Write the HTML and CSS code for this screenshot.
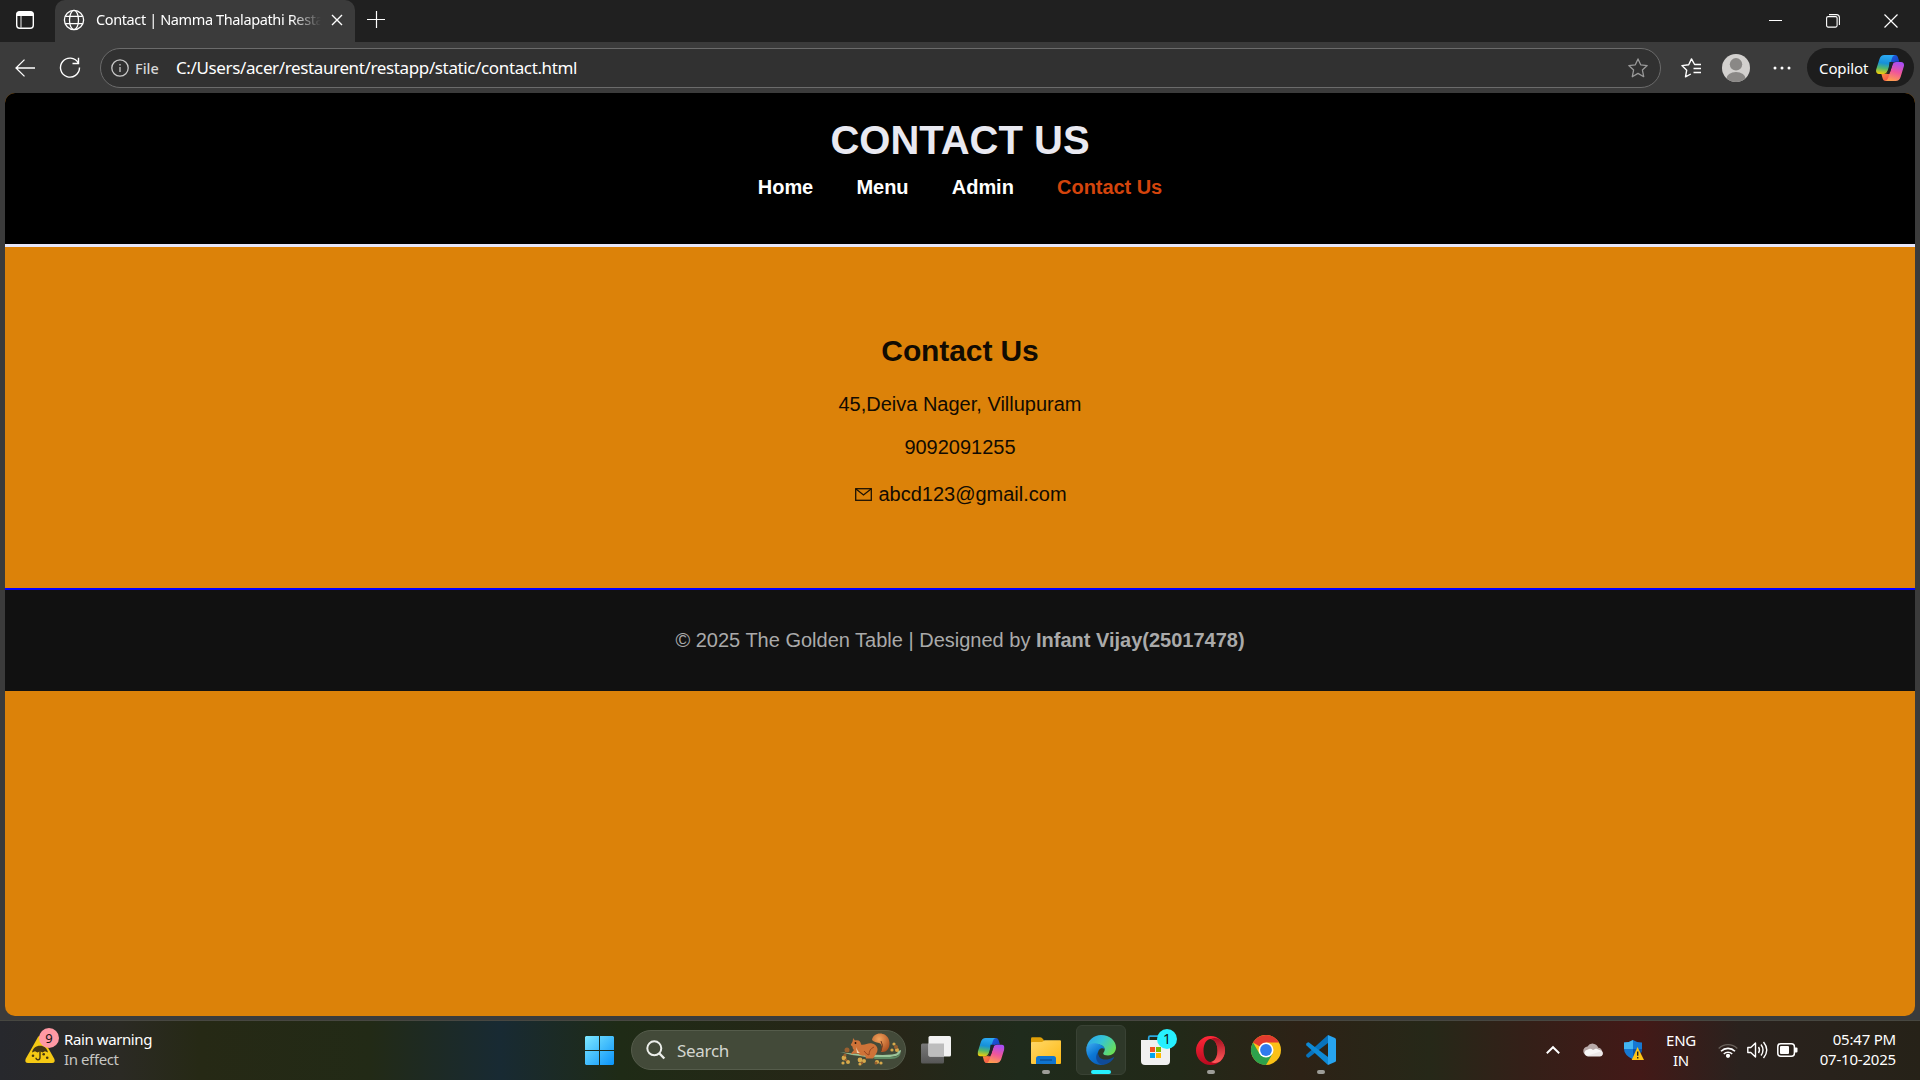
FILE: index.html
```html
<!DOCTYPE html>
<html lang="en">
<head>
<meta charset="utf-8">
<title>Contact | Namma Thalapathi Restaurant</title>
<link rel="stylesheet" href="styles.css">
</head>
<body>
<svg class="defs" width="0" height="0" aria-hidden="true">
  <defs>
    <linearGradient id="cpA" x1="0.3" y1="0" x2="0.15" y2="1"><stop offset="0" stop-color="#2ba8f2"/><stop offset=".4" stop-color="#1690d8"/><stop offset=".68" stop-color="#55b86a"/><stop offset="1" stop-color="#ffd000"/></linearGradient>
    <linearGradient id="cpB" x1="0.6" y1="0" x2="0.3" y2="1"><stop offset="0" stop-color="#a94df5"/><stop offset=".5" stop-color="#f0569a"/><stop offset="1" stop-color="#ffa04c"/></linearGradient>
    <linearGradient id="cpC" x1="0" y1="0" x2="1" y2="1"><stop offset="0" stop-color="#1b5fe0"/><stop offset="1" stop-color="#1a3fc0"/></linearGradient>
    <linearGradient id="cpD" x1="0" y1="0" x2="1" y2="1"><stop offset="0" stop-color="#ff9a3d"/><stop offset="1" stop-color="#ee3f4e"/></linearGradient>
    <symbol id="copilot" viewBox="0 0 28 26">
      <path d="M16 0h3.200c1.600 0 2.300 1.200 2.800 2.600l1.300 4.200h-3.600c-2 0-3 1-3.600 2.800L13 7z" fill="url(#cpC)"/>
      <path d="M12 26H9.600c-1.800 0-2.500-1.200-3-2.700L5.400 19h3.300c2 0 3.100-1 3.700-2.800L16 19z" fill="url(#cpD)"/>
      <path d="M8.500 0H19c-1.700.3-2.500 1.700-3 3.200l-3.600 10.600C11.200 17.400 9.800 19 7.600 19H3C.6 19-.4 17 .2 14.500L3.500 4C4.400 1.500 5.800 0 8.500 0z" fill="url(#cpA)"/>
      <path d="M19.600 26H9.200c1.700-.3 2.500-1.700 3-3.200l4.200-12.700c.7-2.300 1.800-3.100 4-3.100H25c2.500 0 3.500 2 2.800 4.600L24.600 22c-.9 2.500-2.300 4-5 4z" fill="url(#cpB)"/>
      <path d="M13.500 7h3.800l-1 3.300-2.900 8.700h-3.200c1-.6 1.600-1.500 2.100-3z" fill="#20242a"/>
    </symbol>
  </defs>
</svg>

<div class="browser">
  <div class="tabstrip">
    <svg class="tab-actions" width="20" height="20" viewBox="0 0 20 20"><rect x="1.700" y="1.700" width="16.600" height="16.600" rx="3" fill="none" stroke="#fff" stroke-width="1.400"/><path d="M1.500 6V4.500a3 3 0 0 1 3-3h11a3 3 0 0 1 3 3V6z" fill="#fff"/><path d="M6 6v12" stroke="#ccc" stroke-width="1.200"/></svg>
    <div class="tab">
      <svg width="22" height="22" viewBox="0 0 22 22" fill="none" stroke="#fff" stroke-width="1.300"><circle cx="11" cy="11" r="9.600"/><ellipse cx="11" cy="11" rx="4.500" ry="9.600"/><path d="M2.300 7.400h17.400M2.300 14.600h17.400"/></svg>
      <span class="tab-title">Contact | Namma Thalapathi Resta</span>
      <svg class="tab-close" width="12" height="12" viewBox="0 0 12 12"><path d="M1 1l10 10M11 1L1 11" stroke="#fff" stroke-width="1.400"/></svg>
    </div>
    <svg class="new-tab" width="18" height="18" viewBox="0 0 18 18"><path d="M0 9.500h18M9.500 1v17" stroke="#fff" stroke-width="1.200"/></svg>
    <div class="window-controls">
      <svg width="13" height="14" viewBox="0 0 13 14"><path d="M0 6.500h13" stroke="#fff"/></svg>
      <svg width="14" height="14" viewBox="0 0 14 14" fill="none" stroke="#fff" stroke-width="1.100"><rect x=".6" y="2.600" width="10.500" height="10.500" rx="1.500"/><path d="M3 .6h7.400a3 3 0 0 1 3 3V11"/></svg>
      <svg width="14" height="14" viewBox="0 0 14 14"><path d="M.5.5l13 13M13.500.5l-13 13" stroke="#fff" stroke-width="1.200"/></svg>
    </div>
  </div>

  <div class="toolbar">
    <svg class="back" width="20" height="18" viewBox="0 0 20 18" fill="none" stroke="#fff" stroke-width="1.300"><path d="M20 9H1M9.500.6L1 9l8.500 8.400"/></svg>
    <svg class="reload" width="22" height="22" viewBox="0 0 22 22" fill="none" stroke="#fff" stroke-width="1.400"><path d="M19.200 5.800A9.500 9.500 0 1 0 20.500 10.500"/><path d="M19.500.8v5.700h-6"/></svg>
    <div class="address">
      <svg width="18" height="18" viewBox="0 0 18 18" fill="none" stroke="#c8c8c8" stroke-width="1.300"><circle cx="9" cy="9" r="8.200"/><path d="M9 8v5"/><path d="M9 5v1.500"/></svg>
      <span class="scheme">File</span>
      <span class="url">C:/Users/acer/restaurent/restapp/static/contact.html</span>
      <svg class="fav" width="20" height="20" viewBox="0 0 20 20" fill="none" stroke="#999" stroke-width="1.300" stroke-linejoin="round"><path d="M10 .9l2.700 5.900 6.500.8-4.800 4.400 1.300 6.700L10 15.400l-5.700 3.300L5.600 12 .8 7.600l6.500-.8z"/></svg>
    </div>
    <svg class="favorites" width="21" height="20" viewBox="0 0 21 20" fill="none" stroke="#fff" stroke-width="1.400" stroke-linejoin="round"><path d="M20 6.500h-6.400L10.500.9 7.700 6.700.9 7.600l4.800 4.600-1.200 6.600L9.800 16M12.500 10.500H20M12.500 14.500H20"/></svg>
    <svg class="profile" width="28" height="28" viewBox="0 0 28 28"><defs><clipPath id="av"><circle cx="14" cy="14" r="14"/></clipPath></defs><g clip-path="url(#av)"><rect width="28" height="28" fill="#d2d0ce"/><circle cx="14" cy="10.300" r="6.200" fill="#8a8886"/><ellipse cx="14" cy="25" rx="9.700" ry="7" fill="#8a8886"/></g></svg>
    <svg class="more" width="18" height="4" viewBox="0 0 18 4" fill="#fff"><circle cx="2" cy="2" r="1.500"/><circle cx="9" cy="2" r="1.500"/><circle cx="16" cy="2" r="1.500"/></svg>
    <div class="copilot-btn"><span>Copilot</span><svg width="28" height="26"><use href="#copilot"/></svg></div>
  </div>

  <div class="page">
    <header class="site-header">
      <h1>CONTACT US</h1>
      <nav><a>Home</a><a>Menu</a><a>Admin</a><a class="active">Contact Us</a></nav>
    </header>
    <main class="contact">
      <h2>Contact Us</h2>
      <p>45,Deiva Nager, Villupuram</p>
      <p class="phone">9092091255</p>
      <p class="mail"><svg width="17" height="13" viewBox="0 0 17 13" fill="none" stroke="#1d1204" stroke-width="1.300"><rect x=".7" y=".7" width="15.600" height="11.600"/><path d="M1 1l7.500 6L16 1"/></svg><span>abcd123@gmail.com</span></p>
    </main>
    <footer class="site-footer">© 2025 The Golden Table | Designed by <b>Infant Vijay(25017478)</b></footer>
  </div>
</div>

<div class="taskbar">
  <div class="weather">
    <div class="weather-icon">
      <svg width="30" height="28" viewBox="0 0 30 28"><path d="M12.700 2.500Q15-1.500 17.300 2.500L29.400 24Q30.600 27.800 27 28H3Q-.6 27.800.6 24z" fill="#f5c914"/><path d="M7 17.500c.8-4.200 4-6.800 8-6.800s7.200 2.600 8 6.800l-3-1.300-2.500 1.300-2.500-1.300-2.500 1.300-2.500-1.300z" fill="#443613"/><path d="M15 16v6.500c0 3-4 3-4 .3" fill="none" stroke="#443613" stroke-width="1.400"/><g fill="#443613"><circle cx="8" cy="20.800" r="1.300"/><circle cx="18.700" cy="19.300" r="1.300"/><circle cx="22.200" cy="22.700" r="1.300"/></g></svg>
      <span class="count">9</span>
    </div>
    <div class="weather-text"><span class="w1">Rain warning</span><span class="w2">In effect</span></div>
  </div>

  <div class="apps">
    <div class="app start"><svg width="29" height="29" viewBox="0 0 29 29"><defs><linearGradient id="win" gradientUnits="userSpaceOnUse" x1="0" y1="0" x2="29" y2="29"><stop offset="0" stop-color="#7de8ff"/><stop offset="1" stop-color="#0a93fa"/></linearGradient></defs><path d="M1 0h13v14H0V1zM15 0h13l1 1v13H15zM0 15h14v14H1l-1-1zM15 15h14v13l-1 1H15z" fill="url(#win)"/></svg></div>
    <div class="search">
      <svg width="20" height="20" viewBox="0 0 20 20" fill="none" stroke="#eceeea" stroke-width="2"><circle cx="8.300" cy="8.300" r="7"/><path d="M13 13l5.300 5.500" stroke-width="2.400"/></svg>
      <span class="search-text">Search</span>
      <svg class="squirrel" width="64" height="34" viewBox="0 0 64 34">
        <defs><radialGradient id="tail" cx=".4" cy=".3" r=".8"><stop offset="0" stop-color="#f2a45c"/><stop offset="1" stop-color="#a6481c"/></radialGradient></defs>
        <path d="M1 19q10 3 20 4 18 4 36 0 5-2 5-6l-3 1q0 3-6 3.500-12 1-22-.5Q14 21 1 19z" fill="#9cc59a"/>
        <path d="M32 24h20q8 0 10-5-1 7-10 7H36z" fill="#5e8a63"/>
        <g fill="#d7a94b"><circle cx="5" cy="25" r="2.400"/><circle cx="9" cy="29" r="2"/><circle cx="4" cy="30" r="1.600"/><circle cx="21" cy="27" r="2.400"/><circle cx="25" cy="28" r="2"/><circle cx="21" cy="31" r="1.600"/><circle cx="38" cy="29" r="2.100"/><circle cx="42" cy="30" r="1.600"/><circle cx="55" cy="11" r="1.600"/><circle cx="58" cy="17" r="2"/><circle cx="53" cy="17" r="1.600"/></g>
        <g fill="#9a6030"><circle cx="8" cy="17" r="2.500"/><circle cx="6" cy="22" r="1.500"/><circle cx="37" cy="30" r="1.500"/><circle cx="7" cy="27" r="1.300"/><circle cx="23" cy="30" r="1.200"/><circle cx="57" cy="14" r="2"/></g>
        <path d="M33 7C34-1 47-2 50 7c2 7-2 13-8 12 2-4 1-8-2-9-3-.5-5-1-7-3z" fill="url(#tail)"/>
        <path d="M42 8q3 4 0 10" stroke="#713a1e" fill="none"/>
        <path d="M14 5l2 2.500c4-1 6 1.500 6 4 4 1 7-2 11-1 5 1 8 6 3 12l-2 3h-7l-1-3c-4 1-6-1-7-2h-4l-2 1-1-1 3-3.500c-2-1.500-1-3-2-4-1.500-.5-1.500-1.500-.5-2.500 1-1.500 1.500-3 1.500-5.500z" fill="#cf7338"/>
        <path d="M25 18q3 4 5 4 0-6 5-8" stroke="#98451f" fill="none"/><circle cx="16.500" cy="10" r=".9" fill="#27140b"/><path d="M17 14q2 5 4 6l-3 0z" fill="#efd0b0"/>
      </svg>
    </div>
    <div class="app"><svg width="30" height="28" viewBox="0 0 30 28"><defs><linearGradient id="tv" x1="0" y1="0" x2="0" y2="1"><stop offset="0" stop-color="#797979"/><stop offset="1" stop-color="#565656"/></linearGradient></defs><rect y="7.500" width="23" height="20" rx="1.500" fill="url(#tv)"/><rect x="7.500" width="22.500" height="20.500" rx="1.500" fill="#f2f2f2"/><path d="M7.500 7.500H23v13H9l-1.500-1z" fill="#bdbdbd"/></svg></div>
    <div class="app"><svg width="28" height="25" viewBox="0 0 28 26"><use href="#copilot"/></svg></div>
    <div class="app"><svg width="30" height="27" viewBox="0 0 30 27"><defs><linearGradient id="fold" x1="0" y1="0" x2="1" y2="1"><stop offset="0" stop-color="#ffd869"/><stop offset="1" stop-color="#fdb913"/></linearGradient></defs><path d="M0 1.500Q0 .3 1.300.3H9q1.200 0 2 .8l2 2.200V8H0z" fill="#e0a008"/><path d="M0 6q0-1 1-1h10l2.500-1.700H29q1 0 1 1V26q0 1-1 1H1q-1 0-1-1z" fill="url(#fold)"/><path d="M5 27v-5.500q0-2.500 2.500-2.500h15q2.500 0 2.500 2.500V27z" fill="#0f75cf"/><path d="M9 23h12" stroke="#0a4c94" stroke-width="1.300"/></svg><i class="dot"></i></div>
    <div class="app current"><svg width="30" height="30" viewBox="0 0 30 30"><defs><linearGradient id="eg" x1="0" y1=".2" x2="1" y2=".7"><stop offset="0" stop-color="#2ba5ec"/><stop offset=".45" stop-color="#35c4d4"/><stop offset="1" stop-color="#6ce052"/></linearGradient><linearGradient id="eb" x1="0" y1="0" x2=".7" y2="1"><stop offset="0" stop-color="#42aef0"/><stop offset=".5" stop-color="#0b77d4"/><stop offset="1" stop-color="#0b5cb8"/></linearGradient></defs><path d="M.6 12C2 5 8 0 15 0c9 0 15 6 15 12.500 0 5-4 8-8 8-3 0-4.800-1-4.800-2 0-1 1.500-1.500 1.500-4 0-2.700-3-5-7-5C6.500 9 2 10 .6 12z" fill="url(#eg)"/><path d="M.4 12C2.500 8.500 7 7.500 11 8.500c4.500 1 7.500 3 7.500 5.500-2.500-1.700-6.500 0-6.500 4.500 0 5.500 5 9 9.500 9-2 1.500-4 2.500-6.500 2.500C6 30-1 21.500.4 12z" fill="url(#eb)"/><path d="M12 17c-.8 7 7 10 15.500 5.200.4-.2.800.2.500.6-2.500 4-6.500 6.700-11.500 7.100-5.500-.9-8.500-7.400-4.500-12.900z" fill="#104b98"/></svg><i class="dot"></i></div>
    <div class="app store"><svg width="29" height="30" viewBox="0 0 29 30"><path d="M7.700 6V2.700q0-1.500 1.500-1.500h10.600q1.500 0 1.500 1.500V6" fill="none" stroke="#2ba8e0" stroke-width="1.700"/><path d="M0 5h29v21q0 4-4 4H4q-4 0-4-4z" fill="#f0f0f0"/><path fill="#f25022" d="M9 12h5v5H9z"/><path fill="#7fba00" d="M15 12h5v5h-5z"/><path fill="#00a4ef" d="M9 18h5v5H9z"/><path fill="#ffb900" d="M15 18h5v5h-5z"/></svg><span class="badge">1</span></div>
    <div class="app"><svg width="29" height="29" viewBox="0 0 29 29"><defs><linearGradient id="op" x1="0" y1="0" x2="0" y2="1"><stop offset="0" stop-color="#ff2838"/><stop offset="1" stop-color="#b8091f"/></linearGradient><linearGradient id="op2" x1="0" y1="0" x2="0" y2="1"><stop offset="0" stop-color="#a81020"/><stop offset="1" stop-color="#ff5c5c"/></linearGradient></defs><path d="M14.500 0a14.500 14.500 0 1 0 0 29 14.500 14.500 0 1 0 0-29zm0 3c4 0 7 5 7 11.500s-3 11.500-7 11.500-7-5-7-11.500 3-11.500 7-11.500z" fill="url(#op)" fill-rule="evenodd"/><path d="M15 3c3-1.500 6-1 9 .6C31 10 30.500 19.500 24.300 25.300c-3 1.900-6.300 2.200-9.300.7 4-.5 6.500-5.500 6.500-11.500S19 3.500 15 3z" fill="url(#op2)"/></svg><i class="dot"></i></div>
    <div class="app"><svg width="30" height="30" viewBox="0 0 30 30"><circle cx="15" cy="15" r="15" fill="#fbc116"/><path d="M15 15L2 7.500A15 15 0 0 1 28 7.500H15z" fill="#e33b2e"/><path d="M2 7.500A15 15 0 0 0 15 30l6.500-11.200L15 15 8.500 18.700z" fill="#2da14c"/><circle cx="15" cy="15" r="7.500" fill="#fff"/><circle cx="15" cy="15" r="5.900" fill="#2f7bee"/></svg></div>
    <div class="app"><svg width="30" height="30" viewBox="0 0 30 30"><path d="M.5 19.500L22 0v8L3 22.500q-.8.500-1.400 0L.4 21.400q-.7-1 .1-1.900z" fill="#0873bd"/><path d="M.5 10.500L22 30v-8L3 7.500q-.8-.5-1.400 0L.4 8.600q-.7 1 .1 1.900z" fill="#0e8ad6"/><path d="M22 0l7 3q1 .5 1 1.600v20.800q0 1.100-1 1.600l-7 3z" fill="#27a4f0"/></svg><i class="dot"></i></div>
  </div>

  <div class="tray">
    <svg class="chev" width="14" height="8" viewBox="0 0 14 8" fill="none" stroke="#fff" stroke-width="1.900"><path d="M.8 7.300L7 1.200l6.200 6.100"/></svg>
    <svg class="cloud" width="20" height="14" viewBox="0 0 20 14"><path d="M5 12.500a4.500 4.500 0 0 1-.5-9 6 6 0 0 1 10.800 1.200A4 4 0 0 1 19 8z" fill="#b8aaa9"/><path d="M5 13.500a3.500 3.500 0 0 1-2.500-6L6 6q2-.6 4 1l3-1.500 6 2.500q1.500 1.500.8 3.500-.8 2-2.800 2z" fill="#fff" opacity=".9"/></svg>
    <svg class="shield" width="20" height="20" viewBox="0 0 20 20"><path d="M9 0q4 2.600 9 2.500V9q0 6-9 10.500Q0 15 0 9V2.500Q5 2.600 9 0z" fill="#1678d2"/><path d="M9 0v9H0V2.500Q5 2.600 9 0z" fill="#43b5f0"/><path d="M9 9h9q0 6-9 10.500z" fill="#0b55a8"/><path d="M13.500 7L20 20H7.700z" fill="#ffc414"/><path d="M13.700 11.500v4.300M13.700 17v1.500" stroke="#222" stroke-width="1.400"/></svg>
    <div class="lang"><span>ENG</span><span>IN</span></div>
    <svg class="wifi" width="20" height="15" viewBox="0 0 20 15" fill="none" stroke="#fff" stroke-width="1.600"><path d="M.7 5.500a13 13 0 0 1 18.600 0" stroke="#6a625c" stroke-width="1.300"/><path d="M3 8.200a10 10 0 0 1 14 0M5.800 11a6 6 0 0 1 8.400 0"/><circle cx="10" cy="12.800" r="1.300" fill="#fff" stroke="#fff"/></svg>
    <svg class="vol" width="21" height="18" viewBox="0 0 21 18" fill="none" stroke="#fff" stroke-width="1.400" stroke-linejoin="round"><path d="M.8 6.500h3L8.500 2v14l-4.700-4.500h-3zM11.500 6q2 3 0 6M14 3.500q4 5.500 0 11M16.500 1q6.500 8 0 16"/></svg>
    <svg class="bat" width="21" height="14" viewBox="0 0 21 14"><rect x=".8" y=".8" width="16.600" height="12.400" rx="3" fill="none" stroke="#fff" stroke-width="1.500"/><rect x="3" y="3" width="9" height="8" rx="1" fill="#fff"/><path d="M18 4.500h1.500q1 0 1 1v3q0 1-1 1H18z" fill="#fff"/></svg>
    <div class="clock"><span class="time">05:47 PM</span><span class="date">07-10-2025</span></div>
  </div>
</div>
</body>
</html>
```
FILE: styles.css
```css
* { box-sizing: border-box; }
body {
  margin: 0;
  width: 1920px;
  height: 1080px;
  overflow: hidden;
  display: flex;
  flex-direction: column;
  background: #3b3b3b;
  color: #fff;
  font-family: "Noto Sans", "Open Sans", sans-serif;
}
svg { display: block; flex: none; overflow: visible; }
.defs { position: absolute; }
h1, h2, p { margin: 0; }
span { white-space: nowrap; }

.browser { height: 1020px; display: flex; flex-direction: column; }

/* Tab strip */
.tabstrip { height: 42px; background: #202020; display: flex; align-items: flex-start; }
.tab-actions { margin: 10px 0 0 15px; }
.tab {
  width: 300px;
  height: 42px;
  margin-left: 20px;
  padding: 0 13px 2px 8px;
  display: flex;
  align-items: center;
  background: #3b3b3b;
  border-radius: 10px 10px 0 0;
}
.tab-title {
  width: 226px;
  margin: -2px 0 0 11px;
  font-size: 14.5px;
  letter-spacing: -0.38px;
  -webkit-mask-image: linear-gradient(90deg, #000 195px, transparent 225px);
  mask-image: linear-gradient(90deg, #000 195px, transparent 225px);
}
.tab-close { margin-left: 9px; }
.new-tab { margin: 10px 0 0 12px; }
.window-controls { margin: 14px 22px 0 auto; display: flex; gap: 44px; }

/* Toolbar */
.toolbar { height: 51px; display: flex; align-items: center; padding: 0 6px 0 15px; }
.reload { margin-left: 24px; }
.address {
  width: 1561px;
  height: 40px;
  margin-left: 19px;
  padding: 0 12px 0 10px;
  display: flex;
  align-items: center;
  background: #313131;
  border: 1px solid #6b6b6b;
  border-radius: 20px;
}
.scheme { width: 41px; margin-left: 6px; font-size: 14.5px; font-weight: 500; color: #d6d6d6; }
.url { margin-top: -1px; font-size: 17px; letter-spacing: -0.37px; }
.fav { margin-left: auto; }
.favorites { margin-left: 20px; }
.profile { margin-left: 20px; }
.more { margin-left: 23px; }
.copilot-btn {
  width: 107px;
  height: 39px;
  margin-left: 16px;
  padding: 0 10px 0 12px;
  display: flex;
  align-items: center;
  justify-content: space-between;
  background: #1d1d1d;
  border-radius: 20px;
  font-size: 15px;
  letter-spacing: -0.1px;
}

/* Web page */
.page {
  height: 923px;
  margin: 0 5px;
  overflow: hidden;
  border-radius: 10px;
  background: #dc8209;
  text-align: center;
  font-family: "Liberation Sans", Arial, sans-serif;
}
.site-header { height: 154px; padding-top: 24px; background: #000; border-bottom: 3px solid #e6e6fa; }
h1 { font-size: 40px; line-height: 46px; color: #e9e9f1; }
nav {
  margin-top: 12px;
  display: flex;
  justify-content: center;
  gap: 43.3px;
  font-size: 20px;
  line-height: 24px;
  font-weight: bold;
  letter-spacing: -0.05px;
}
.active { color: #d4440c; }
.contact { height: 341px; padding-top: 86px; color: #120b02; font-size: 20px; line-height: 24px; }
h2 { margin-bottom: 23px; font-size: 30px; line-height: 36px; letter-spacing: -0.1px; }
.phone { margin-top: 19px; }
.mail { margin-top: 23px; padding-left: 2px; display: flex; justify-content: center; align-items: center; gap: 6px; }
.site-footer {
  height: 103px;
  padding-top: 38px;
  background: #111;
  border-top: 2px solid #0000ff;
  color: #aaa;
  font-size: 20px;
  line-height: 24px;
}

/* Taskbar */
.taskbar {
  height: 60px;
  display: flex;
  align-items: center;
  border-top: 1px solid #474741;
  background: linear-gradient(90deg, #27282d 0, #2b2a24 120px, #262915 200px, #222a16 370px, #182a33 500px, #1f2b16 620px, #282517 880px, #1f2b1c 1020px, #222918 1180px, #2d2216 1300px, #262818 1430px, #332018 1520px, #431917 1640px, #2a221e 1740px, #262218 1920px);
}
.weather { width: 571px; padding: 0 0 4px 25px; display: flex; align-items: center; }
.weather-icon { position: relative; }
.count {
  position: absolute;
  left: 14px;
  top: -7px;
  width: 20px;
  height: 20px;
  border-radius: 50%;
  background: #ff99a4;
  color: #111;
  font-size: 13px;
  line-height: 20px;
  text-align: center;
}
.weather-text { margin-left: 9px; display: flex; flex-direction: column; font-size: 15px; line-height: 20px; letter-spacing: -0.4px; }
.w2 { color: #c6c6c2; }
.apps { padding-bottom: 1px; display: flex; align-items: center; }
.app {
  position: relative;
  width: 55px;
  height: 50px;
  display: flex;
  align-items: center;
  justify-content: center;
}
.start { width: 56px; margin-right: 4px; }
.search {
  width: 275px;
  height: 40px;
  margin-right: 2px;
  padding: 0 2px 0 14px;
  display: flex;
  align-items: center;
  border-radius: 20px;
  border: 1px solid #555c4b;
  background: #434a39;
}
.search-text { margin-left: 11px; font-size: 17px; letter-spacing: -0.3px; color: #d4d6d0; }
.squirrel { margin-left: auto; }
.current { width: 50px; margin: 0 2px 0 3px; border-radius: 6px; background: #2e3829; border: 1px solid #394234; }
.dot { position: absolute; bottom: 1px; left: 50%; width: 8px; height: 4px; margin-left: -4px; border-radius: 2px; background: #9d9d98; }
.current .dot { bottom: 0; width: 20px; margin-left: -10px; background: #26f0ff; }
.badge {
  position: absolute;
  right: 6px;
  top: 4px;
  width: 20px;
  height: 20px;
  border-radius: 50%;
  background: #26f0ff;
  color: #111;
  font-size: 14px;
  line-height: 20px;
  text-align: center;
}
.tray { margin-left: auto; padding: 0 24px 1px 0; display: flex; align-items: center; }
.cloud { margin-left: 23px; }
.shield { margin-left: 21px; }
.lang { width: 44px; margin: -1px 0 0 15px; text-align: center; display: flex; flex-direction: column; font-size: 15px; line-height: 20px; letter-spacing: -0.3px; }
.wifi { margin-left: 15px; }
.vol { margin-left: 9px; }
.bat { margin-left: 9px; }
.clock { width: 90px; margin: -3px 0 0 8px; display: flex; flex-direction: column; text-align: right; font-size: 15px; line-height: 20px; letter-spacing: -0.2px; }
```
